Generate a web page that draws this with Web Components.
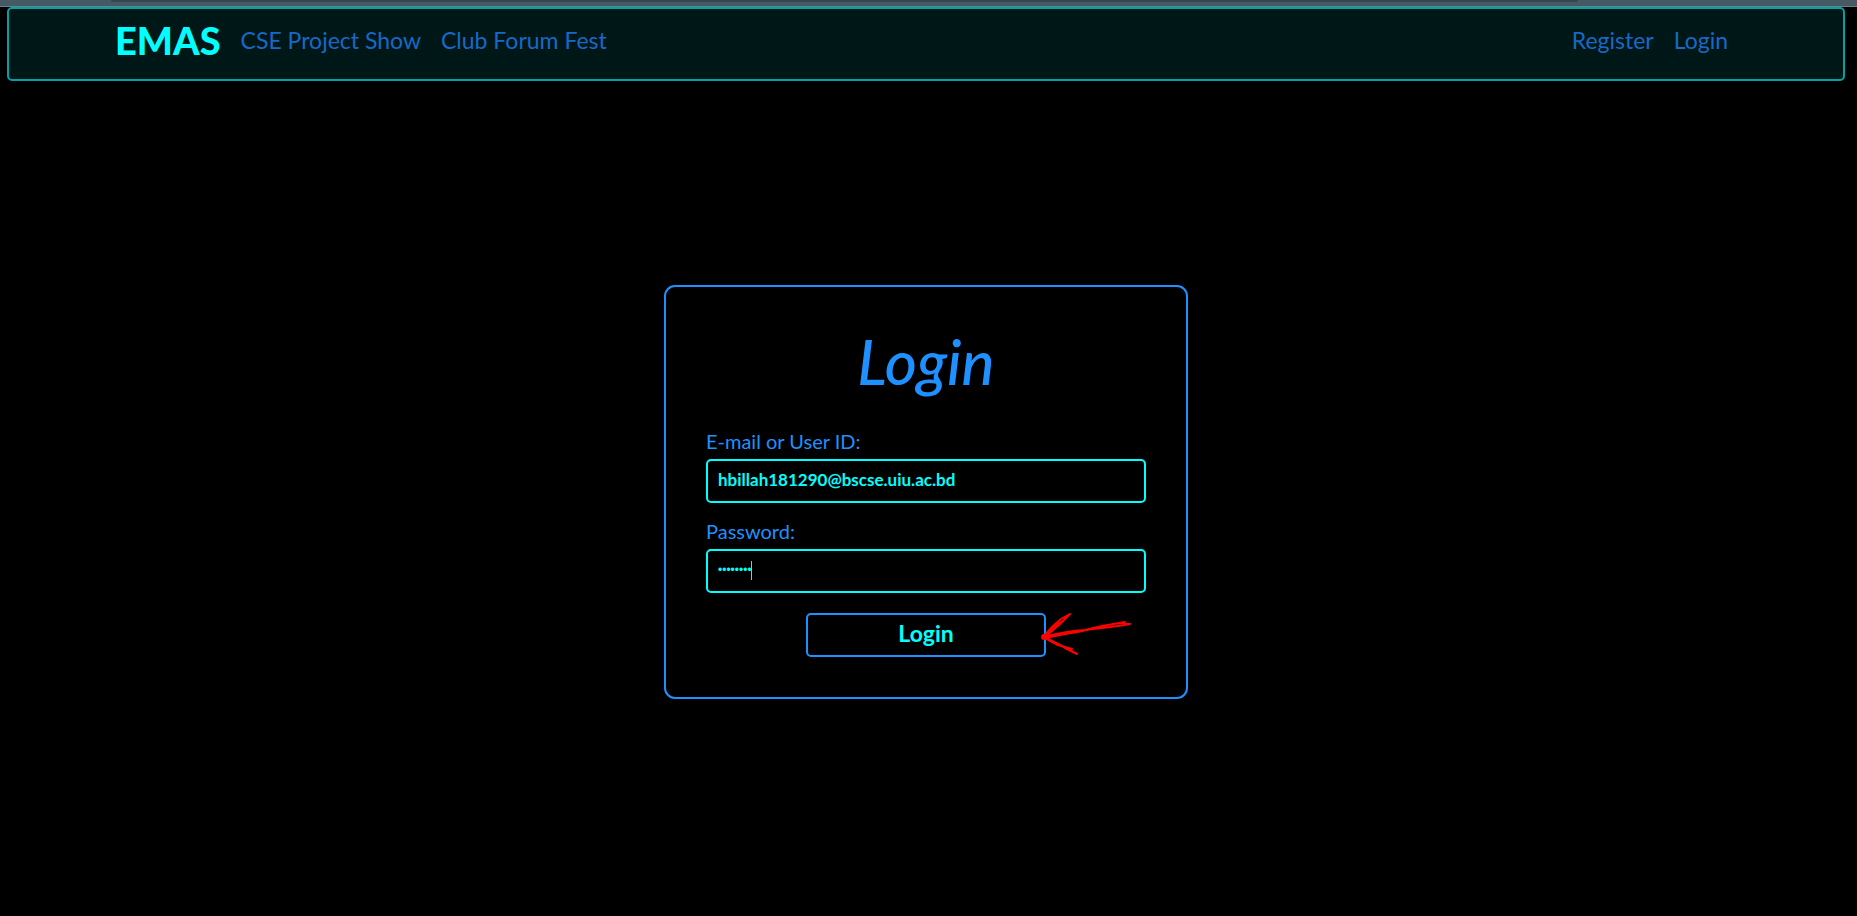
<!DOCTYPE html>
<html lang="en">
<head>
<meta charset="utf-8">
<title>EMAS – Login</title>
<style>
  html { background: #000; }
  body {
    margin: 0;
    min-height: 100vh;
    display: flex;
    flex-direction: column;
    color: dodgerblue;
    font-family: Lato, "Noto Sans", sans-serif;
  }
  emas-page { flex: 1; }
</style>
</head>
<body>
<window-edge></window-edge>
<emas-page>
  <emas-nav slot="nav">
    <nav-link slot="start" href="#project-show">CSE Project Show</nav-link>
    <nav-link slot="start" href="#forum-fest">Club Forum Fest</nav-link>
    <nav-link slot="end" href="#register">Register</nav-link>
    <nav-link slot="end" href="#login">Login</nav-link>
  </emas-nav>
  <login-card>Login</login-card>
</emas-page>
<script>
  const define = (name, html, setup) => {
    const template = document.createElement('template');
    template.innerHTML = html;
    customElements.define(name, class extends HTMLElement {
      constructor() {
        super();
        this.attachShadow({ mode: 'open' }).append(template.content.cloneNode(true));
      }
      connectedCallback() { if (setup) setup(this, this.shadowRoot); }
    });
  };

  define('window-edge', `
    <style>
      :host { display: block; box-sizing: border-box; height: 7px; background: #455a64; border-bottom: 1px solid #6f7f88; }
      div { height: 2px; margin: 0 15% 0 6%; background: #37474f; border-radius: 0 0 4px 4px; }
    </style>
    <div></div>`);

  define('emas-page', `
    <style>
      :host { display: flex; flex-direction: column; padding: 0 12px 14px 7px; }
      main { flex: 1; display: flex; align-items: center; justify-content: center; }
    </style>
    <slot name="nav"></slot>
    <main><slot></slot></main>`);

  define('nav-link', `
    <style>
      :host { display: block; }
      a { display: block; color: #1769c8; font-size: 23px; line-height: 40px; text-decoration: none; }
      a:hover { color: aqua; }
    </style>
    <a><slot></slot></a>`,
    (host, root) => { root.querySelector('a').href = host.getAttribute('href'); });

  define('emas-nav', `
    <style>
      :host { display: block; }
      nav {
        display: flex; align-items: flex-start;
        padding: 11px 115px 19px 106px;
        background: #001717; border: 2px solid #00a3a3; border-radius: 5px;
      }
      .brand { margin-right: 20px; color: aqua; font-size: 38px; font-weight: 900; line-height: 40px; text-decoration: none; }
      .group { display: flex; gap: 20px; }
      .end { margin-left: auto; }
    </style>
    <nav>
      <a class="brand" href="#home">EMAS</a>
      <div class="group"><slot name="start"></slot></div>
      <div class="group end"><slot name="end"></slot></div>
    </nav>`);

  define('text-field', `
    <style>
      :host { display: block; margin-bottom: 18px; }
      label { display: block; margin-bottom: 8px; font-size: 20px; line-height: 20px; }
      .box { position: relative; }
      input {
        display: block; box-sizing: border-box; width: 100%; height: 44px; padding: 0 10px 2px;
        color: aqua; background: #000; border: 2px solid aqua; border-radius: 5px; outline: 0;
        font: 700 17px Lato, "Noto Sans", sans-serif;
      }
      input[type=password] { font: 12px "Liberation Sans", sans-serif; }
      .caret { position: absolute; left: 45px; top: 12px; width: 1px; height: 19px; background: aqua; }
    </style>
    <label for="field"><slot></slot></label>
    <div class="box"><input id="field"></div>`,
    (host, root) => {
      const input = root.querySelector('input');
      input.type = host.getAttribute('type');
      input.value = host.getAttribute('value');
      if (host.hasAttribute('active')) {
        const caret = document.createElement('span');
        caret.className = 'caret';
        root.querySelector('.box').append(caret);
      }
    });

  define('sketch-arrow', `
    <style>
      :host { display: block; width: 92px; height: 44px; pointer-events: none; }
      svg { display: block; }
    </style>
    <svg width="92" height="44" viewBox="0 0 92 44" fill="none" stroke="red" stroke-width="2" stroke-linecap="round" stroke-linejoin="round" aria-hidden="true">
      <path d="M2 24 Q26 18 44 17 Q64 12 84 9 L79 10 L89 11 Q72 14 51 16 Q32 19 4 25 L24 21 L42 18"/>
      <path d="M2 24 L12 13 L20 6 L29 1 L18 12 L4 24 L14 14 L22 8 L17 11 L8 20"/>
      <path d="M2 24 L17 32 L31 36 L24 35 L36 41 L21 33 L5 25"/>
      <circle cx="3" cy="24" r="2" fill="red"/>
    </svg>`);

  define('login-card', `
    <style>
      :host { display: block; box-sizing: border-box; width: 100%; max-width: 524px; padding: 40px; border: 2px solid dodgerblue; border-radius: 11px; }
      h1 { margin: 0 0 36px; font-size: 62px; font-style: italic; font-weight: 500; line-height: 68px; text-align: center; }
      .submit { position: relative; width: 240px; margin: 20px auto 0; }
      button {
        display: block; box-sizing: border-box; width: 100%; height: 44px; padding: 0 0 4px;
        color: aqua; background: #000; border: 2px solid dodgerblue; border-radius: 5px;
        font: 700 23px Lato, "Noto Sans", sans-serif;
      }
      sketch-arrow { position: absolute; left: 235px; top: 0; }
    </style>
    <form>
      <h1><slot></slot></h1>
      <text-field type="text" value="hbillah181290@bscse.uiu.ac.bd">E-mail or User ID:</text-field>
      <text-field type="password" value="password" active>Password:</text-field>
      <div class="submit"><button type="submit">Login</button><sketch-arrow></sketch-arrow></div>
    </form>`);
</script>
</body>
</html>
